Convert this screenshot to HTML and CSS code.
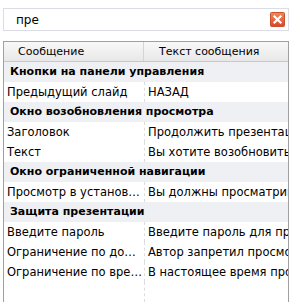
FILE: index.html
```html
<!DOCTYPE html>
<html>
<head>
<meta charset="utf-8">
<link rel="stylesheet" href="styles.css">
</head>
<body>
<div class="page">
  <div class="search">
    <span class="query">пре</span>
    <span class="clear">
      <svg width="15" height="15" viewBox="0 0 15 15">
        <defs>
          <linearGradient id="g" x1="0" y1="0" x2="0" y2="1">
            <stop offset="0" stop-color="#f08a5c"/>
            <stop offset="1" stop-color="#d9472a"/>
          </linearGradient>
        </defs>
        <rect x="0.5" y="0.5" width="14" height="14" rx="1" fill="url(#g)" stroke="#c9502f"/>
        <path d="M4.5 4.5 L10.5 10.5 M10.5 4.5 L4.5 10.5" stroke="#fff" stroke-width="2.2" stroke-linecap="square"/>
      </svg>
    </span>
  </div>
  <div class="table">
    <div class="head">
      <div class="hcell c1">Сообщение</div>
      <div class="hcell c2">Текст сообщения</div>
    </div>
    <div class="body">
      <div class="group">Кнопки на панели управления</div>
      <div class="row"><div class="cell c1">Предыдущий слайд</div><div class="cell c2">НАЗАД</div></div>
      <div class="group">Окно возобновления просмотра</div>
      <div class="row"><div class="cell c1">Заголовок</div><div class="cell c2">Продолжить презентацию?</div></div>
      <div class="row"><div class="cell c1">Текст</div><div class="cell c2">Вы хотите возобновить просмотр?</div></div>
      <div class="group">Окно ограниченной навигации</div>
      <div class="row"><div class="cell c1">Просмотр в установленном порядке</div><div class="cell c2">Вы должны просматривать слайды по порядку</div></div>
      <div class="group">Защита презентации</div>
      <div class="row"><div class="cell c1">Введите пароль</div><div class="cell c2">Введите пароль для просмотра</div></div>
      <div class="row"><div class="cell c1">Ограничение по домену</div><div class="cell c2">Автор запретил просмотр</div></div>
      <div class="row"><div class="cell c1">Ограничение по времени</div><div class="cell c2">В настоящее время просмотр недоступен</div></div>
      <div class="row filler"><div class="cell c1"></div><div class="cell c2"></div></div>
    </div>
  </div>
</div>
</body>
</html>
```

FILE: styles.css
```css
html, body {
  margin: 0;
  padding: 0;
  background: #fff;
  height: 100%;
  overflow: hidden;
}
body {
  font-family: "DejaVu Sans", Tahoma, sans-serif;
  font-size: 11px;
  color: #000;
}
.page {
  padding: 8px 9px 0 3px;
  display: flex;
  flex-direction: column;
  height: 302px;
  box-sizing: border-box;
}
.search {
  height: 23px;
  box-sizing: border-box;
  border: 1px solid #dcdce4;
  display: flex;
  align-items: center;
  justify-content: space-between;
  padding: 0 3px 0 12px;
}
.query {
  font-size: 12px;
}
.clear {
  display: flex;
  width: 15px;
  height: 15px;
}
.table {
  margin-top: 10px;
  flex: 1;
  border: 1px solid #a0a0a0;
  border-bottom: none;
  display: flex;
  flex-direction: column;
  overflow: hidden;
}
.head {
  display: flex;
  height: 19px;
  border-bottom: 1px solid #c8c8c8;
  background: linear-gradient(#f8f8f8, #e8e8e8);
}
.hcell {
  display: flex;
  align-items: center;
  font-size: 11px;
  white-space: nowrap;
  overflow: hidden;
}
.hcell.c1 {
  width: 140px;
  padding-left: 14px;
  box-sizing: border-box;
  border-right: 1px solid #d4d4d4;
}
.hcell.c2 {
  flex: 1;
  padding-left: 15px;
}
.body {
  flex: 1;
  display: flex;
  flex-direction: column;
}
.group {
  height: 20px;
  line-height: 20px;
  background: #eff0f4;
  font-weight: bold;
  padding-left: 6px;
  font-size: 11px;
  white-space: nowrap;
  overflow: hidden;
}
.row {
  display: flex;
  height: 20px;
  line-height: 20px;
}
.row.filler {
  flex: 1;
}
.cell {
  white-space: nowrap;
  overflow: hidden;
  font-size: 11.5px;
}
.cell.c1 {
  width: 141px;
  padding-left: 3px;
  padding-right: 0;
  box-sizing: border-box;
  text-overflow: ellipsis;
  border-right: 1px dashed #dcdcdc;
}
.cell.c2 {
  flex: 1;
  padding-left: 3px;
}
```
